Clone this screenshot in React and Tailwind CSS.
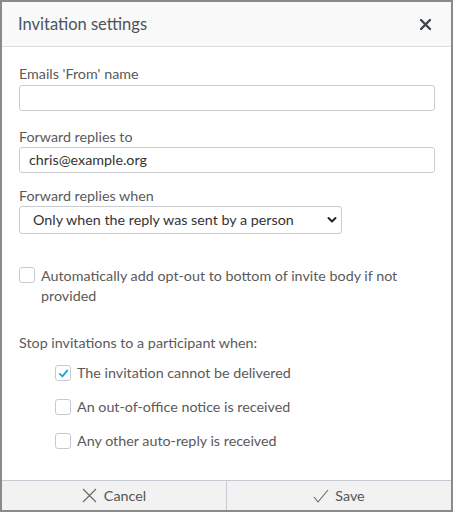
import React from "react";

function Check({ checked }) {
  return (
    <span className="flex h-4 w-4 shrink-0 items-center justify-center rounded-[3px] border border-[#c6cbd3] bg-white">
      {checked && (
        <svg width="11" height="11" viewBox="0 0 12 12" fill="none">
          <path d="M2 6.5 L4.8 9.2 L10 2.8" stroke="#1aa3df" strokeWidth="2" strokeLinecap="round" strokeLinejoin="round" />
        </svg>
      )}
    </span>
  );
}

export default function App() {
  return (
    <div
      className="flex h-[512px] w-[453px] flex-col border-2 border-[#8a8a8a] bg-white text-[14.3px] leading-[20px] text-[#5a5a5a]"
      style={{ fontFamily: "Lato, 'Noto Sans', sans-serif" }}
    >
      <div className="flex h-[45px] shrink-0 items-center justify-between border-b border-[#dcdcdc] bg-[#f9f9f9] pl-4 pr-[20px]">
        <span className="text-[16.5px] text-[#4a5360]">Invitation settings</span>
        <svg width="11" height="11" viewBox="0 0 11 11" fill="none">
          <path d="M1 1 L10 10 M10 1 L1 10" stroke="#3f454d" strokeWidth="2.4" strokeLinecap="round" />
        </svg>
      </div>

      <div className="flex flex-1 flex-col pl-[17px] pr-[16px] pt-[17px]">
        <label>Emails 'From' name</label>
        <div className="mt-px h-[26px] rounded-[3px] border border-[#c9ccd1] bg-white" />

        <label className="mt-[16px]">Forward replies to</label>
        <div className="flex h-[26px] items-center rounded-[3px] border border-[#c9ccd1] bg-white pl-[9px] text-[#333]">
          chris@example.org
        </div>

        <label className="mt-[13px]">Forward replies when</label>
        <div className="flex h-[28px] w-[323px] items-center justify-between rounded-[3px] border border-[#c9ccd1] bg-white pl-[13px] pr-[4px] text-[#333]">
          <span>Only when the reply was sent by a person</span>
          <svg width="10" height="8" viewBox="0 0 10 8" fill="none">
            <path d="M1.5 2 L5 5.5 L8.5 2" stroke="#222" strokeWidth="2" strokeLinecap="round" strokeLinejoin="round" />
          </svg>
        </div>

        <div className="mt-[32px] flex items-start gap-[6px]">
          <div className="pt-[1px]">
            <Check checked={false} />
          </div>
          <span className="pr-[20px]">Automatically add opt-out to bottom of invite body if not provided</span>
        </div>

        <div className="mt-[27px]">Stop invitations to a participant when:</div>

        <div className="mt-[10px] flex flex-col gap-[14px] pl-[36px]">
          <div className="flex items-center gap-[6px]">
            <Check checked={true} />
            <span>The invitation cannot be delivered</span>
          </div>
          <div className="flex items-center gap-[6px]">
            <Check checked={false} />
            <span>An out-of-office notice is received</span>
          </div>
          <div className="flex items-center gap-[6px]">
            <Check checked={false} />
            <span>Any other auto-reply is received</span>
          </div>
        </div>
      </div>

      <div className="flex h-[30px] shrink-0 border-t border-[#c6cad3] bg-[#f2f2f2] text-[#555]">
        <div className="flex flex-1 items-center justify-center gap-[7px] border-r border-[#c6cad3]">
          <svg width="15" height="15" viewBox="0 0 15 15" fill="none">
            <path d="M1 1 L14 14 M14 1 L1 14" stroke="#666" strokeWidth="1.1" />
          </svg>
          <span>Cancel</span>
        </div>
        <div className="flex flex-1 items-center justify-center gap-[6px]">
          <svg width="16" height="14" viewBox="0 0 16 14" fill="none">
            <path d="M1 8 L5 13 L15 1" stroke="#666" strokeWidth="1.1" />
          </svg>
          <span>Save</span>
        </div>
      </div>
    </div>
  );
}
